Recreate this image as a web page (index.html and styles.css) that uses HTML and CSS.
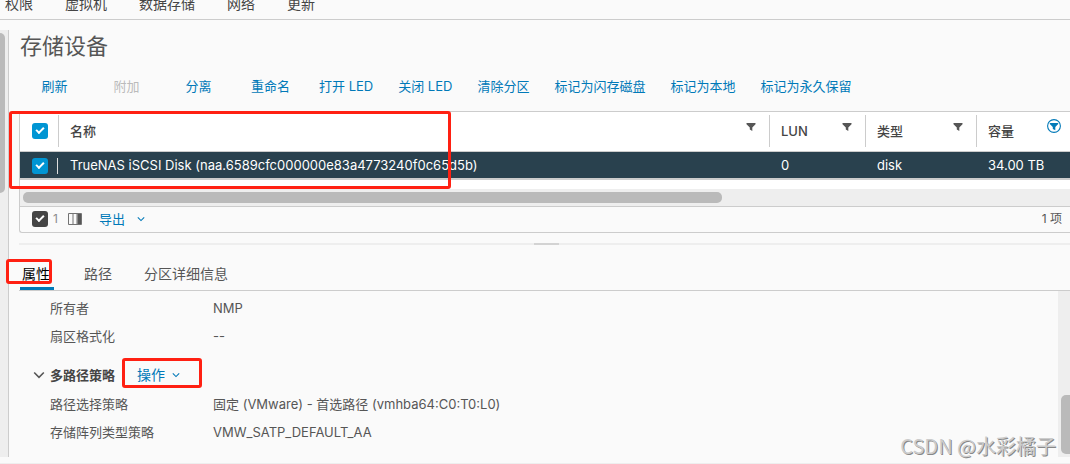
FILE: index.html
```html
<!DOCTYPE html>
<html lang="zh-CN">
<head>
<meta charset="utf-8">
<meta name="viewport" content="width=device-width, initial-scale=1">
<title>存储设备</title>
<link rel="stylesheet" href="styles.css">
</head>
<body>
<svg class="sprite" aria-hidden="true">
  <symbol id="filter" viewBox="0 0 10 10"><path d="M0.5 1h9v1.2L6.3 5.4V9L3.8 7.6V5.4L0.5 2.2z" fill="currentColor"/></symbol>
  <symbol id="filter-on" viewBox="0 0 14 14"><circle cx="7" cy="7" r="6.4" fill="none" stroke="currentColor" stroke-width="1.1"/><path d="M2.8 4h8.4v1L8.3 7.9v3.4L5.8 10V7.9L2.8 5z" fill="currentColor"/></symbol>
  <symbol id="chevron" viewBox="0 0 12 12"><path d="M1.2 3.5L6 8.3l4.8-4.8" fill="none" stroke="currentColor" stroke-width="1.6"/></symbol>
</svg>
<nav class="topnav">
  <a href="#">权限</a><a href="#">虚拟机</a><a href="#">数据存储</a><a href="#">网络</a><a href="#">更新</a>
</nav>
<div class="workspace">
  <div class="side-scroll"><div class="side-thumb"></div></div>
  <main class="main">
    <h1 class="title">存储设备</h1>
    <div class="toolbar">
      <button>刷新</button><button disabled>附加</button><button>分离</button><button>重命名</button><button>打开 LED</button><button>关闭 LED</button><button>清除分区</button><button>标记为闪存磁盘</button><button>标记为本地</button><button>标记为永久保留</button>
    </div>
    <section class="grid">
      <table class="devices">
        <colgroup><col class="c-check"><col><col class="c-lun"><col class="c-type"><col class="c-size"></colgroup>
        <thead>
          <tr>
            <th><input class="check" type="checkbox" checked aria-label="全选"></th>
            <th><div class="head"><span>名称</span><button class="filter" aria-label="筛选名称"><svg><use href="#filter"/></svg></button></div></th>
            <th><div class="head"><span>LUN</span><button class="filter" aria-label="筛选 LUN"><svg><use href="#filter"/></svg></button></div></th>
            <th><div class="head"><span>类型</span><button class="filter" aria-label="筛选类型"><svg><use href="#filter"/></svg></button></div></th>
            <th><div class="head"><span>容量</span><button class="filter filter-on" aria-label="筛选容量"><svg><use href="#filter-on"/></svg></button></div></th>
          </tr>
        </thead>
        <tbody>
          <tr>
            <td><div class="pick"><input class="check" type="checkbox" checked aria-label="选择设备"></div></td>
            <td>TrueNAS iSCSI Disk (naa.6589cfc000000e83a4773240f0c65d5b)</td>
            <td>0</td>
            <td>disk</td>
            <td>34.00 TB</td>
          </tr>
        </tbody>
      </table>
      <div class="hscroll"><div class="hthumb"></div></div>
      <footer class="grid-foot">
        <label class="count"><input class="check dark" type="checkbox" checked>1</label>
        <button class="columns" aria-label="显示列"><svg viewBox="0 0 14 12"><path d="M0.5 0.5h13v11h-13zM5 0.5v11M9 0.5v11" fill="none" stroke="#737373"/><path d="M9.5 1H13v10H9.5z" fill="#565656"/></svg></button>
        <button class="link export">导出<svg class="caret"><use href="#chevron"/></svg></button>
        <span class="total">1 项</span>
      </footer>
      <div class="mark mark-grid"></div>
    </section>
    <div class="splitter"><div class="grip"></div></div>
    <nav class="tabs">
      <a href="#" class="active">属性<span class="mark mark-tab"></span></a><a href="#">路径</a><a href="#">分区详细信息</a>
    </nav>
    <div class="details">
      <div class="props">
        <dl class="pairs">
          <dt>所有者</dt><dd>NMP</dd>
          <dt>扇区格式化</dt><dd>--</dd>
        </dl>
        <div class="group">
          <svg class="expand"><use href="#chevron"/></svg>
          <h2>多路径策略</h2>
          <button class="link action">操作<svg class="caret"><use href="#chevron"/></svg><span class="mark mark-action"></span></button>
        </div>
        <dl class="pairs">
          <dt>路径选择策略</dt><dd>固定 (VMware) - 首选路径 (vmhba64:C0:T0:L0)</dd>
          <dt>存储阵列类型策略</dt><dd>VMW_SATP_DEFAULT_AA</dd>
        </dl>
      </div>
      <div class="vscroll"><div class="vthumb"></div></div>
    </div>
  </main>
</div>
<div class="watermark">CSDN @水彩橘子</div>
</body>
</html>
```

FILE: styles.css
```css
* { box-sizing: border-box; }
body {
  margin: 0;
  min-height: 100vh;
  display: flex;
  flex-direction: column;
  position: relative;
  overflow: hidden;
  background: #fafafa;
  border-bottom: 1px solid #eee;
  color: #565656;
  font: 13px/20px Inter, "Noto Sans CJK SC", sans-serif;
}
button { font: inherit; color: inherit; background: none; border: 0; padding: 0; cursor: pointer; }
a { color: inherit; text-decoration: none; }
.sprite { position: absolute; width: 0; height: 0; }

.topnav {
  display: flex;
  align-items: flex-end;
  gap: 32px;
  height: 20px;
  padding: 0 5px 5px;
  overflow: hidden;
  border-bottom: 1px solid #ccc;
  font-size: 14px;
  color: #454545;
}
.topnav a { white-space: nowrap; }

.workspace { flex: 1; display: flex; padding: 10px 0 6px; }
.side-scroll { flex: none; width: 9px; padding-top: 3px; background: #eee; border-right: 1px solid #ccc; }
.side-thumb { width: 5px; height: 160px; background: #bababa; border-radius: 0 5px 5px 0; }
.main { flex: 1; min-width: 0; display: flex; flex-direction: column; padding-left: 10px; }

.title { margin: 0; padding-left: 1px; font-size: 22px; line-height: 32px; font-weight: 400; }
.toolbar { display: flex; height: 49px; padding-top: 14px; align-items: flex-start; color: #0079b8; }
.toolbar button { min-width: 71px; padding: 0 12px; white-space: nowrap; }
.toolbar button + button { margin-left: 1px; }
.toolbar button:disabled { color: #bbb; }

.grid { position: relative; border: 1px solid #ccc; border-right: 0; border-radius: 3px 0 0 3px; }
.devices { width: 100%; table-layout: fixed; border-collapse: separate; border-spacing: 0; background: #fff; color: #454545; }
.c-check { width: 38px; }
.c-lun { width: 96px; }
.c-type { width: 111px; }
.c-size { width: 94px; }
th { padding: 3px 0 4px; height: 40px; border-bottom: 1px solid #ccc; font-weight: 500; text-align: left; vertical-align: middle; }
th:first-child { padding-left: 12px; }
.head { display: flex; justify-content: space-between; align-items: flex-start; height: 32px; padding: 6px 9px 0 11px; border-left: 1px solid #ccc; }
.filter { display: flex; padding: 1px 4px 0 0; }
.filter svg { width: 10px; height: 10px; color: #565656; }
.filter-on { padding: 0; margin-top: -2px; }
.filter-on svg { width: 14px; height: 14px; color: #0079b8; }
td { height: 28px; padding: 0 0 1px 12px; background: #29414e; color: #fff; border-bottom: 2px solid #ccc; white-space: nowrap; }
td:first-child { padding: 2px 0 0 12px; }
.pick { display: flex; align-items: center; height: 16px; border-right: 1px solid #ddd; }
.check {
  appearance: none;
  display: block;
  flex: none;
  position: relative;
  width: 16px;
  height: 16px;
  margin: 0;
  border-radius: 3px;
  background: #0095d3;
}
.check::after {
  content: "";
  box-sizing: border-box;
  position: absolute;
  left: 4px;
  top: 4px;
  width: 8px;
  height: 5px;
  border: solid #fff;
  border-width: 0 0 2px 2px;
  transform: rotate(-45deg);
}
.dark { background: #454545; }
.hscroll { padding: 3px; background: #eee; border-top: 9px solid #fff; border-bottom: 1px solid #ccc; }
.hthumb { width: 67%; min-width: 20px; height: 11px; border-radius: 5px; background: #bababa; }
.grid-foot { display: flex; align-items: center; height: 25px; padding: 0 8px 2px 12px; font-size: 12px; }
.count { display: flex; align-items: center; gap: 5px; color: #8c8c8c; }
.columns { display: flex; margin-left: 10px; }
.columns svg { width: 14px; height: 12px; }
.link { display: flex; align-items: center; color: #0079b8; white-space: nowrap; }
.export { margin-left: 17px; gap: 12px; font-size: 13px; }
.caret { width: 8px; height: 8px; }
.total { margin-left: auto; }

.splitter { display: flex; justify-content: center; margin-top: 10px; height: 2px; background: #eee; }
.grip { width: 25px; margin-left: 4px; background: #d3d3d3; }
.tabs { display: flex; gap: 28px; height: 46px; padding-top: 14px; border-bottom: 1px solid #ccc; font-size: 14px; line-height: 30px; }
.tabs a { position: relative; height: 31px; padding: 0 2px; white-space: nowrap; }
.tabs .active { margin-left: 1px; padding: 0 4px 0 2px; color: #000; box-shadow: inset 0 -3px #0079b8; }

.details { flex: 1; display: flex; }
.props { flex: 1; min-width: 0; padding: 3px 0 10px 14px; }
.pairs { display: grid; grid-template-columns: 163px 1fr; margin: 0; padding-left: 17px; line-height: 28px; }
.pairs dd { margin: 0; }
.group { display: flex; align-items: center; height: 24px; padding-right: 12px; margin: 13px 0 3px; }
.group h2 { margin: 0 22px 0 5px; font-size: 13px; font-weight: 600; color: #454545; white-space: nowrap; }
.expand { width: 12px; height: 12px; }
.action { position: relative; gap: 7px; font-size: 14px; }
.vscroll { display: flex; flex-direction: column; justify-content: flex-end; width: 12px; padding: 0 0 3px 3px; background: #eee; }
.vthumb { height: 59px; border-radius: 5px 0 0 5px; background: #bababa; }

.mark { position: absolute; border: 3px solid #ff2012; border-radius: 3px; pointer-events: none; }
.mark-grid { left: -11px; top: -1px; width: 442px; height: 78px; }
.mark-tab { left: -14px; top: 0; width: 46px; height: 25px; }
.mark-action { left: -15px; top: -7px; width: 80px; height: 30px; }
.watermark {
  position: absolute;
  right: 14px;
  bottom: 2px;
  font: 20px/30px "Noto Sans CJK SC", sans-serif;
  color: #ccc;
  text-shadow: 1px 1px 0 #888;
}
```
